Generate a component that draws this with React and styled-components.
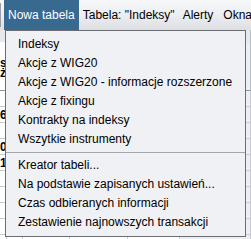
import styled, { createGlobalStyle } from "styled-components";

const GlobalStyle = createGlobalStyle`
  html, body {
    margin: 0;
    padding: 0;
    background: #ffffff;
  }
  body {
    font-family: "Liberation Sans", Arial, sans-serif;
  }
`;

const Frame = styled.div`
  position: relative;
  width: 251px;
  height: 239px;
  overflow: hidden;
  background: #ffffff;
  font-size: 12px;
  color: #000;
`;

const MenuBar = styled.div`
  display: flex;
  align-items: stretch;
  height: 30px;
  background: linear-gradient(#f6f7f9 0%, #eceef1 50%, #dcdee2 100%);
`;

const Nub = styled.div`
  width: 3px;
  margin: 3px 3px 3px 0;
  border: 1px solid #9a9ea6;
  border-left: none;
  border-radius: 0 3px 3px 0;
  background: #e4e6ea;
`;

const BarItem = styled.div`
  display: flex;
  align-items: center;
  padding: 0 4px;
  margin-right: ${(p) => p.$gap || 0}px;
  white-space: nowrap;
  background: ${(p) => (p.$active ? "#386a8f" : "transparent")};
  color: ${(p) => (p.$active ? "#ffffff" : "#000000")};
`;

const Table = styled.div`
  display: grid;
  grid-template-columns: 7px 16px 47px 58px 52px 1fr;
`;

const HeadCell = styled.div`
  height: 61px;
  border-right: 1px solid #b8bcc4;
  border-bottom: 1px solid #8e939c;
  background: ${(p) =>
    p.$gray
      ? "linear-gradient(#e6e8ec 0%, #e6e8ec 20%, #eceef2 21%)"
      : "linear-gradient(#e6e8ec 0%, #e6e8ec 20%, #ffffff 21%)"};
  font-size: 12px;
  font-weight: bold;
  line-height: 10px;
  text-align: right;
  white-space: pre;
  padding: 28px 1px 0 0;
  box-sizing: border-box;
`;

const Cell = styled.div`
  height: 16px;
  border-right: 1px solid #c8ccd2;
  border-bottom: 1px solid #c8ccd2;
  box-sizing: border-box;
  font-size: 12px;
  font-weight: bold;
  line-height: 16px;
  text-align: right;
  padding-right: 1px;
  overflow: hidden;
  background: ${(p) => (p.$gray ? "#eceef2" : "#ffffff")};
`;

const Popup = styled.div`
  position: absolute;
  left: 5px;
  top: 30px;
  width: 241px;
  box-sizing: border-box;
  border: 1px solid #6a6d72;
  background: #f0f1f4;
  padding: 4px 0;
`;

const Item = styled.div`
  height: 19px;
  line-height: 19px;
  padding-left: 12px;
  white-space: nowrap;
  color: #000;
`;

const Separator = styled.div`
  height: 7px;
  display: flex;
  align-items: center;
  &::before {
    content: "";
    flex: 1;
    height: 1px;
    background: #a3a6ab;
  }
`;

const headers = ["s\nż.", "", "", "", "", ""];
const firstColumn = ["", "6", "", "0", "1", "", "", "", "", ""];

const firstGroup = [
  "Indeksy",
  "Akcje z WIG20",
  "Akcje z WIG20 - informacje rozszerzone",
  "Akcje z fixingu",
  "Kontrakty na indeksy",
  "Wszytkie instrumenty",
];

const secondGroup = [
  "Kreator tabeli...",
  "Na podstawie zapisanych ustawień...",
  "Czas odbieranych informacji",
  "Zestawienie najnowszych transakcji",
];

export default function App() {
  return (
    <>
      <GlobalStyle />
      <Frame>
        <MenuBar>
          <Nub />
          <BarItem $active>Nowa tabela</BarItem>
          <BarItem>Tabela: "Indeksy"</BarItem>
          <BarItem $gap={2}>Alerty</BarItem>
          <BarItem>Okna</BarItem>
        </MenuBar>
        <Table>
          {headers.map((h, i) => (
            <HeadCell key={i} $gray={i === 5}>
              {h}
            </HeadCell>
          ))}
          {firstColumn.map((c, ri) =>
            headers.map((_, ci) => (
              <Cell key={ri + "-" + ci} $gray={ci === 5}>
                {ci === 0 ? c : ""}
              </Cell>
            ))
          )}
        </Table>
        <Popup>
          {firstGroup.map((t) => (
            <Item key={t}>{t}</Item>
          ))}
          <Separator />
          {secondGroup.map((t) => (
            <Item key={t}>{t}</Item>
          ))}
        </Popup>
      </Frame>
    </>
  );
}
